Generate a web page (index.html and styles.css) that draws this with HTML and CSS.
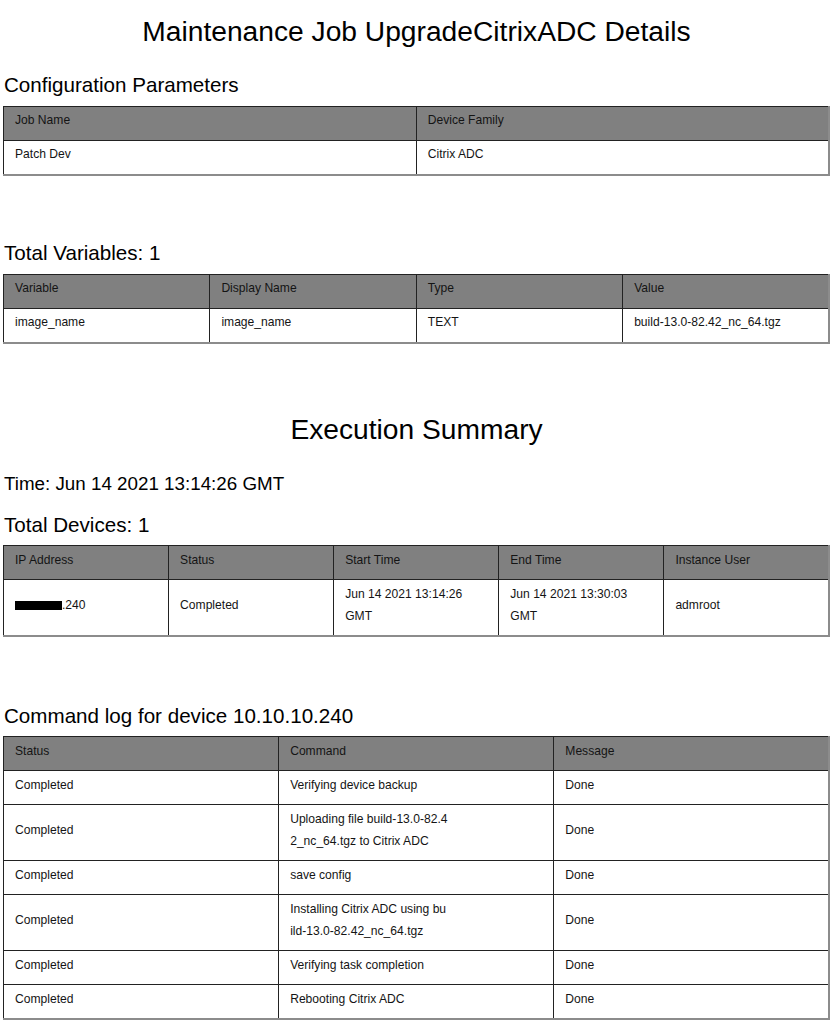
FILE: index.html
```html
<!DOCTYPE html>
<html>
<head>
<meta charset="utf-8">
<title>Maintenance Job UpgradeCitrixADC Details</title>
<link rel="stylesheet" href="styles.css">
</head>
<body>
<div class="page">
  <h1 class="title first">Maintenance Job UpgradeCitrixADC Details</h1>

  <h2 class="section after-title">Configuration Parameters</h2>
  <table class="grid">
    <thead>
      <tr><th>Job Name</th><th>Device Family</th></tr>
    </thead>
    <tbody>
      <tr><td>Patch Dev</td><td>Citrix ADC</td></tr>
    </tbody>
  </table>

  <h2 class="section after-table first-gap">Total Variables: 1</h2>
  <table class="grid">
    <thead>
      <tr><th>Variable</th><th>Display Name</th><th>Type</th><th>Value</th></tr>
    </thead>
    <tbody>
      <tr><td>image_name</td><td>image_name</td><td>TEXT</td><td>build-13.0-82.42_nc_64.tgz</td></tr>
    </tbody>
  </table>

  <h1 class="title after-table-title">Execution Summary</h1>

  <p class="time">Time: Jun 14 2021 13:14:26 GMT</p>

  <h2 class="section after-time">Total Devices: 1</h2>
  <table class="grid">
    <thead>
      <tr><th>IP Address</th><th>Status</th><th>Start Time</th><th>End Time</th><th>Instance User</th></tr>
    </thead>
    <tbody>
      <tr>
        <td><span class="redact"></span>.240</td>
        <td>Completed</td>
        <td>Jun 14 2021 13:14:26<br>GMT</td>
        <td>Jun 14 2021 13:30:03<br>GMT</td>
        <td>admroot</td>
      </tr>
    </tbody>
  </table>

  <h2 class="section after-table">Command log for device 10.10.10.240</h2>
  <table class="grid">
    <thead>
      <tr><th>Status</th><th>Command</th><th>Message</th></tr>
    </thead>
    <tbody>
      <tr><td>Completed</td><td>Verifying device backup</td><td>Done</td></tr>
      <tr><td>Completed</td><td>Uploading file build-13.0-82.4<br>2_nc_64.tgz to Citrix ADC</td><td>Done</td></tr>
      <tr><td>Completed</td><td>save config</td><td>Done</td></tr>
      <tr><td>Completed</td><td>Installing Citrix ADC using bu<br>ild-13.0-82.42_nc_64.tgz</td><td>Done</td></tr>
      <tr><td>Completed</td><td>Verifying task completion</td><td>Done</td></tr>
      <tr><td>Completed</td><td>Rebooting Citrix ADC</td><td>Done</td></tr>
    </tbody>
  </table>
</div>
</body>
</html>
```

FILE: styles.css
```css
html, body {
  margin: 0;
  padding: 0;
  background: #ffffff;
}

body {
  font-family: "Liberation Sans", Arial, sans-serif;
  color: #000;
}

.page {
  width: 827px;
  padding: 0 0 0 3px;
}

.title {
  font-size: 28.2px;
  font-weight: normal;
  line-height: 30px;
  text-align: center;
  margin: 0;
}

.title.first {
  margin-top: 16px;
}

.title.after-table-title {
  margin-top: 70px;
}

.section {
  font-size: 20.6px;
  font-weight: normal;
  line-height: 24px;
  margin: 0 0 8.5px 1px;
}

.section.after-title {
  margin-top: 27px;
}

.section.after-table {
  margin-top: 66.5px;
}

.section.after-table.first-gap {
  margin-top: 65.5px;
}

.section.after-time {
  margin-top: 17px;
}

.time {
  font-size: 18.8px;
  line-height: 24px;
  margin: 28px 0 0 1px;
}

.grid {
  width: 827px;
  table-layout: fixed;
  border-collapse: collapse;
  border-right: 2px solid #8c8c8c;
  border-bottom: 2px solid #8c8c8c;
  font-size: 12.1px;
  color: #141414;
}

.grid th,
.grid td {
  border: 1px solid #222;
  padding: 2.5px 11px 8.5px;
  line-height: 22px;
  text-align: left;
  font-weight: normal;
  vertical-align: middle;
}

.grid thead th {
  background: #808080;
  color: #141414;
}

.redact {
  display: inline-block;
  width: 47px;
  height: 9px;
  background: #000;
  vertical-align: -1px;
}
```
